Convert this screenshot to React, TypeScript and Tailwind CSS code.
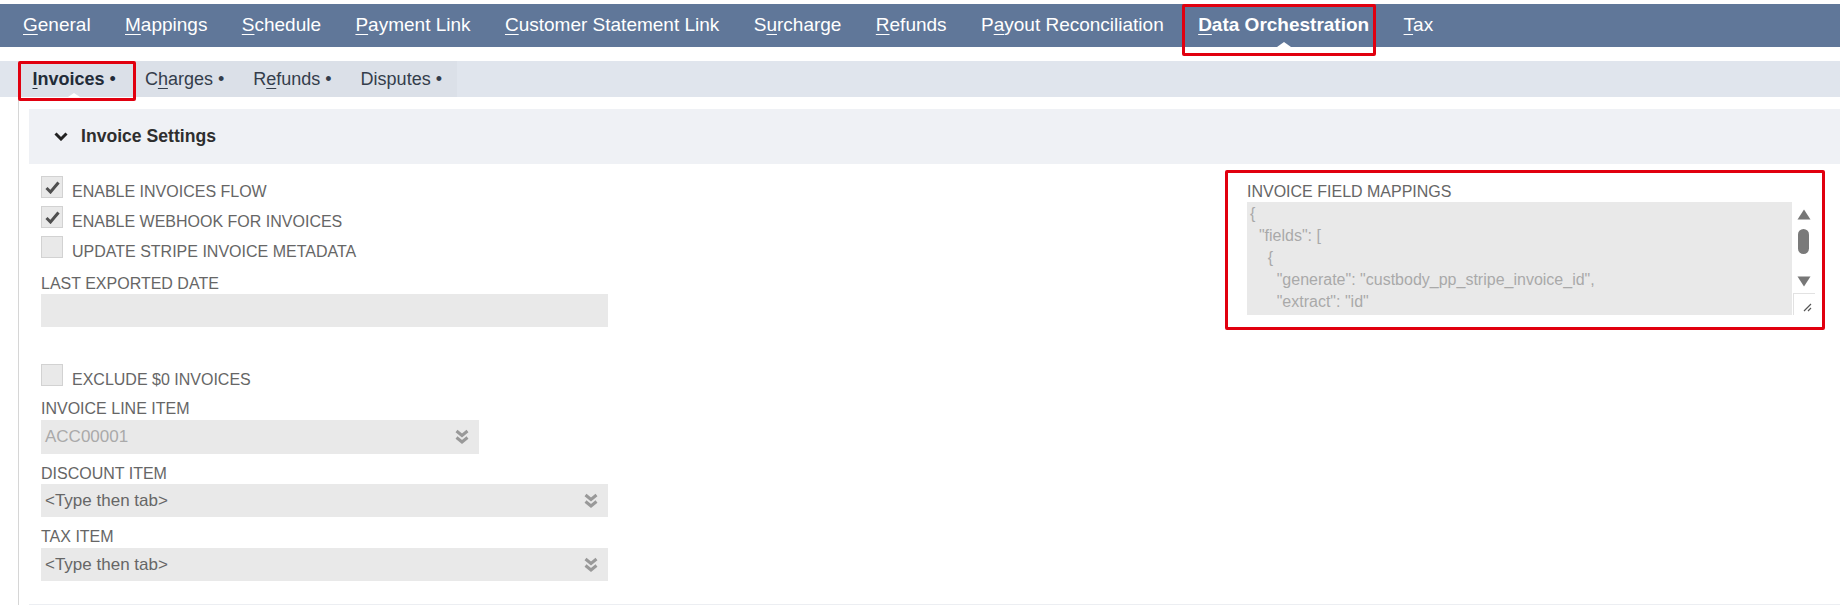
import React from "react";

type Tab = { label: string; u: number; active?: boolean };

const mainTabs: Tab[] = [
  { label: "General", u: 0 },
  { label: "Mappings", u: 0 },
  { label: "Schedule", u: 0 },
  { label: "Payment Link", u: 0 },
  { label: "Customer Statement Link", u: 0 },
  { label: "Surcharge", u: 1 },
  { label: "Refunds", u: 0 },
  { label: "Payout Reconciliation", u: 1 },
  { label: "Data Orchestration", u: 0, active: true },
  { label: "Tax", u: 0 },
];

const subTabs: Tab[] = [
  { label: "Invoices", u: 0, active: true },
  { label: "Charges", u: 1 },
  { label: "Refunds", u: 1 },
  { label: "Disputes", u: -1 },
];

const mappingText = `{
  "fields": [
    {
      "generate": "custbody_pp_stripe_invoice_id",
      "extract": "id"
    }`;

function Accel({ text, u }: { text: string; u: number }) {
  if (u < 0) return <>{text}</>;
  return (
    <>
      {text.slice(0, u)}
      <span className="underline underline-offset-[3px]">{text[u]}</span>
      {text.slice(u + 1)}
    </>
  );
}

function RedBox({ className }: { className: string }) {
  return <span className={"pointer-events-none absolute rounded-[2px] border-[3px] border-[#e1000f] " + className} />;
}

function Checkbox({ checked, label }: { checked?: boolean; label: string }) {
  return (
    <div className="flex h-[30px] items-start">
      <span className="flex h-[22px] w-[22px] items-center justify-center border border-[#d2d2d2] bg-[#e9e9e9]">
        {checked && (
          <svg width="15" height="13" viewBox="0 0 15 13">
            <path d="M1.5 7 L5.5 11 L13.5 1.5" fill="none" stroke="#4f4f4f" strokeWidth="3" />
          </svg>
        )}
      </span>
      <span className="ml-[9px] pt-[7px] text-[16px] leading-[18px] text-[#666]">{label}</span>
    </div>
  );
}

function DoubleChevron() {
  return (
    <svg width="14" height="16" viewBox="0 0 14 16">
      <path d="M1.5 2 L7 6.5 L12.5 2" fill="none" stroke="#999" strokeWidth="3" />
      <path d="M1.5 8.5 L7 13 L12.5 8.5" fill="none" stroke="#999" strokeWidth="3" />
    </svg>
  );
}

function Select({ value, muted, width }: { value: string; muted?: boolean; width: string }) {
  return (
    <div className={"flex items-center justify-between bg-[#e9e9e9] pl-[4px] pr-[10px] " + width}>
      <span className={"text-[17px] " + (muted ? "text-[#aaa]" : "text-[#666]")}>{value}</span>
      <DoubleChevron />
    </div>
  );
}

export default function App() {
  return (
    <div className="h-[605px] w-[1840px] overflow-hidden bg-white font-['Liberation_Sans',Arial,sans-serif]">
      {/* Main tabs */}
      <div className="mt-[4px] flex h-[43px] items-stretch gap-[34.4px] bg-[#607799] pl-[23px]">
        {mainTabs.map((t) => (
          <div key={t.label} className="relative flex items-center">
            <span className={"text-[19px] text-white " + (t.active ? "font-bold" : "")}>
              <Accel text={t.label} u={t.u} />
            </span>
            {t.active && (
              <>
                <span className="absolute bottom-0 left-1/2 h-0 w-0 -translate-x-1/2 border-x-[7px] border-b-[5px] border-x-transparent border-b-white" />
                <RedBox className="top-0 bottom-[-9px] left-[-16px] right-[-7px]" />
              </>
            )}
          </div>
        ))}
      </div>

      {/* Sub tabs */}
      <div className="mt-[14px] flex h-[36px] bg-[#e0e5ed] pl-[18px]">
        <div className="flex items-stretch bg-[#dbe0e8] pr-[1px]">
          {subTabs.map((t) => (
            <div key={t.label} className="relative flex items-center px-[14.5px]">
              <span className={"text-[18px] " + (t.active ? "font-bold text-[#222b38]" : "text-[#343d4b]")}>
                <Accel text={t.label} u={t.u} />
                <span className="font-normal"> •</span>
              </span>
              {t.active && (
                <>
                  <span className="absolute bottom-0 left-1/2 h-0 w-0 -translate-x-1/2 border-x-[6px] border-b-[4px] border-x-transparent border-b-white" />
                  <RedBox className="top-0 bottom-[-4px] left-0 right-[-6px]" />
                </>
              )}
            </div>
          ))}
        </div>
      </div>

      {/* Body */}
      <div className="ml-[18px] border-l border-[#d6d6d6] pl-[10px] pt-[12px]">
        <div className="flex h-[55px] items-center bg-[#eff1f5] pl-[25px]">
          <svg width="14" height="9" viewBox="0 0 14 9">
            <path d="M1.5 1.5 L7 7 L12.5 1.5" fill="none" stroke="#222" strokeWidth="3" />
          </svg>
          <span className="ml-[13px] text-[17.6px] font-bold text-[#2e2e2e]">Invoice Settings</span>
        </div>

        <div className="flex justify-between pl-[12px] pr-[25px] pt-[12px]">
          {/* Left column */}
          <div className="flex w-[567px] flex-col">
            <Checkbox checked label="ENABLE INVOICES FLOW" />
            <Checkbox checked label="ENABLE WEBHOOK FOR INVOICES" />
            <Checkbox label="UPDATE STRIPE INVOICE METADATA" />

            <span className="mt-[9px] text-[16px] leading-[18px] text-[#666]">LAST EXPORTED DATE</span>
            <div className="mt-[1px] h-[33px] w-full bg-[#e9e9e9]" />

            <div className="mt-[37px]">
              <Checkbox label="EXCLUDE $0 INVOICES" />
            </div>

            <span className="mt-[6px] text-[16px] leading-[18px] text-[#666]">INVOICE LINE ITEM</span>
            <div className="mt-[2px]">
              <Select value="ACC00001" muted width="h-[34px] w-[438px]" />
            </div>

            <span className="mt-[11px] text-[16px] leading-[18px] text-[#666]">DISCOUNT ITEM</span>
            <div className="mt-[1px]">
              <Select value="<Type then tab>" width="h-[33px] w-full" />
            </div>

            <span className="mt-[11px] text-[16px] leading-[18px] text-[#666]">TAX ITEM</span>
            <div className="mt-[2px]">
              <Select value="<Type then tab>" width="h-[33px] w-full" />
            </div>
          </div>

          {/* Right column */}
          <div className="relative w-[568px] self-start">
            <div className="mt-[7px] text-[16px] leading-[18px] text-[#666]">INVOICE FIELD MAPPINGS</div>
            <div className="mt-[1px] flex h-[113px]">
              <div className="h-full w-[545px] overflow-hidden whitespace-pre bg-[#e9e9e9] pl-[3px] pt-[1px] text-[16px] leading-[22px] text-[#a9a9a9]">
                {mappingText}
              </div>
              <div className="flex w-[23px] flex-col items-center bg-white">
                <svg className="mt-[7px]" width="14" height="11" viewBox="0 0 14 11">
                  <path d="M7 0.5 L13.5 10.5 L0.5 10.5 Z" fill="#777" />
                </svg>
                <span className="mt-[9px] h-[25px] w-[11px] rounded-[6px] bg-[#7a7a7a]" />
                <svg className="mt-[22px]" width="14" height="11" viewBox="0 0 14 11">
                  <path d="M0.5 0.5 L13.5 0.5 L7 10.5 Z" fill="#777" />
                </svg>
                <div className="mt-[6px] flex h-[22px] w-[22px] items-end justify-end border-l border-t border-[#e2e2e2] pb-[3px] pr-[3px]">
                  <svg width="10" height="10" viewBox="0 0 10 10">
                    <path d="M9 2 L2 9 M9 6 L6 9" stroke="#555" strokeWidth="1.2" />
                  </svg>
                </div>
              </div>
            </div>
            <RedBox className="top-[-6px] bottom-[-15px] left-[-22px] right-[-10px]" />
          </div>
        </div>

        <div className="mt-[23px] h-[2px] bg-[#eceef2]" />
      </div>
    </div>
  );
}
